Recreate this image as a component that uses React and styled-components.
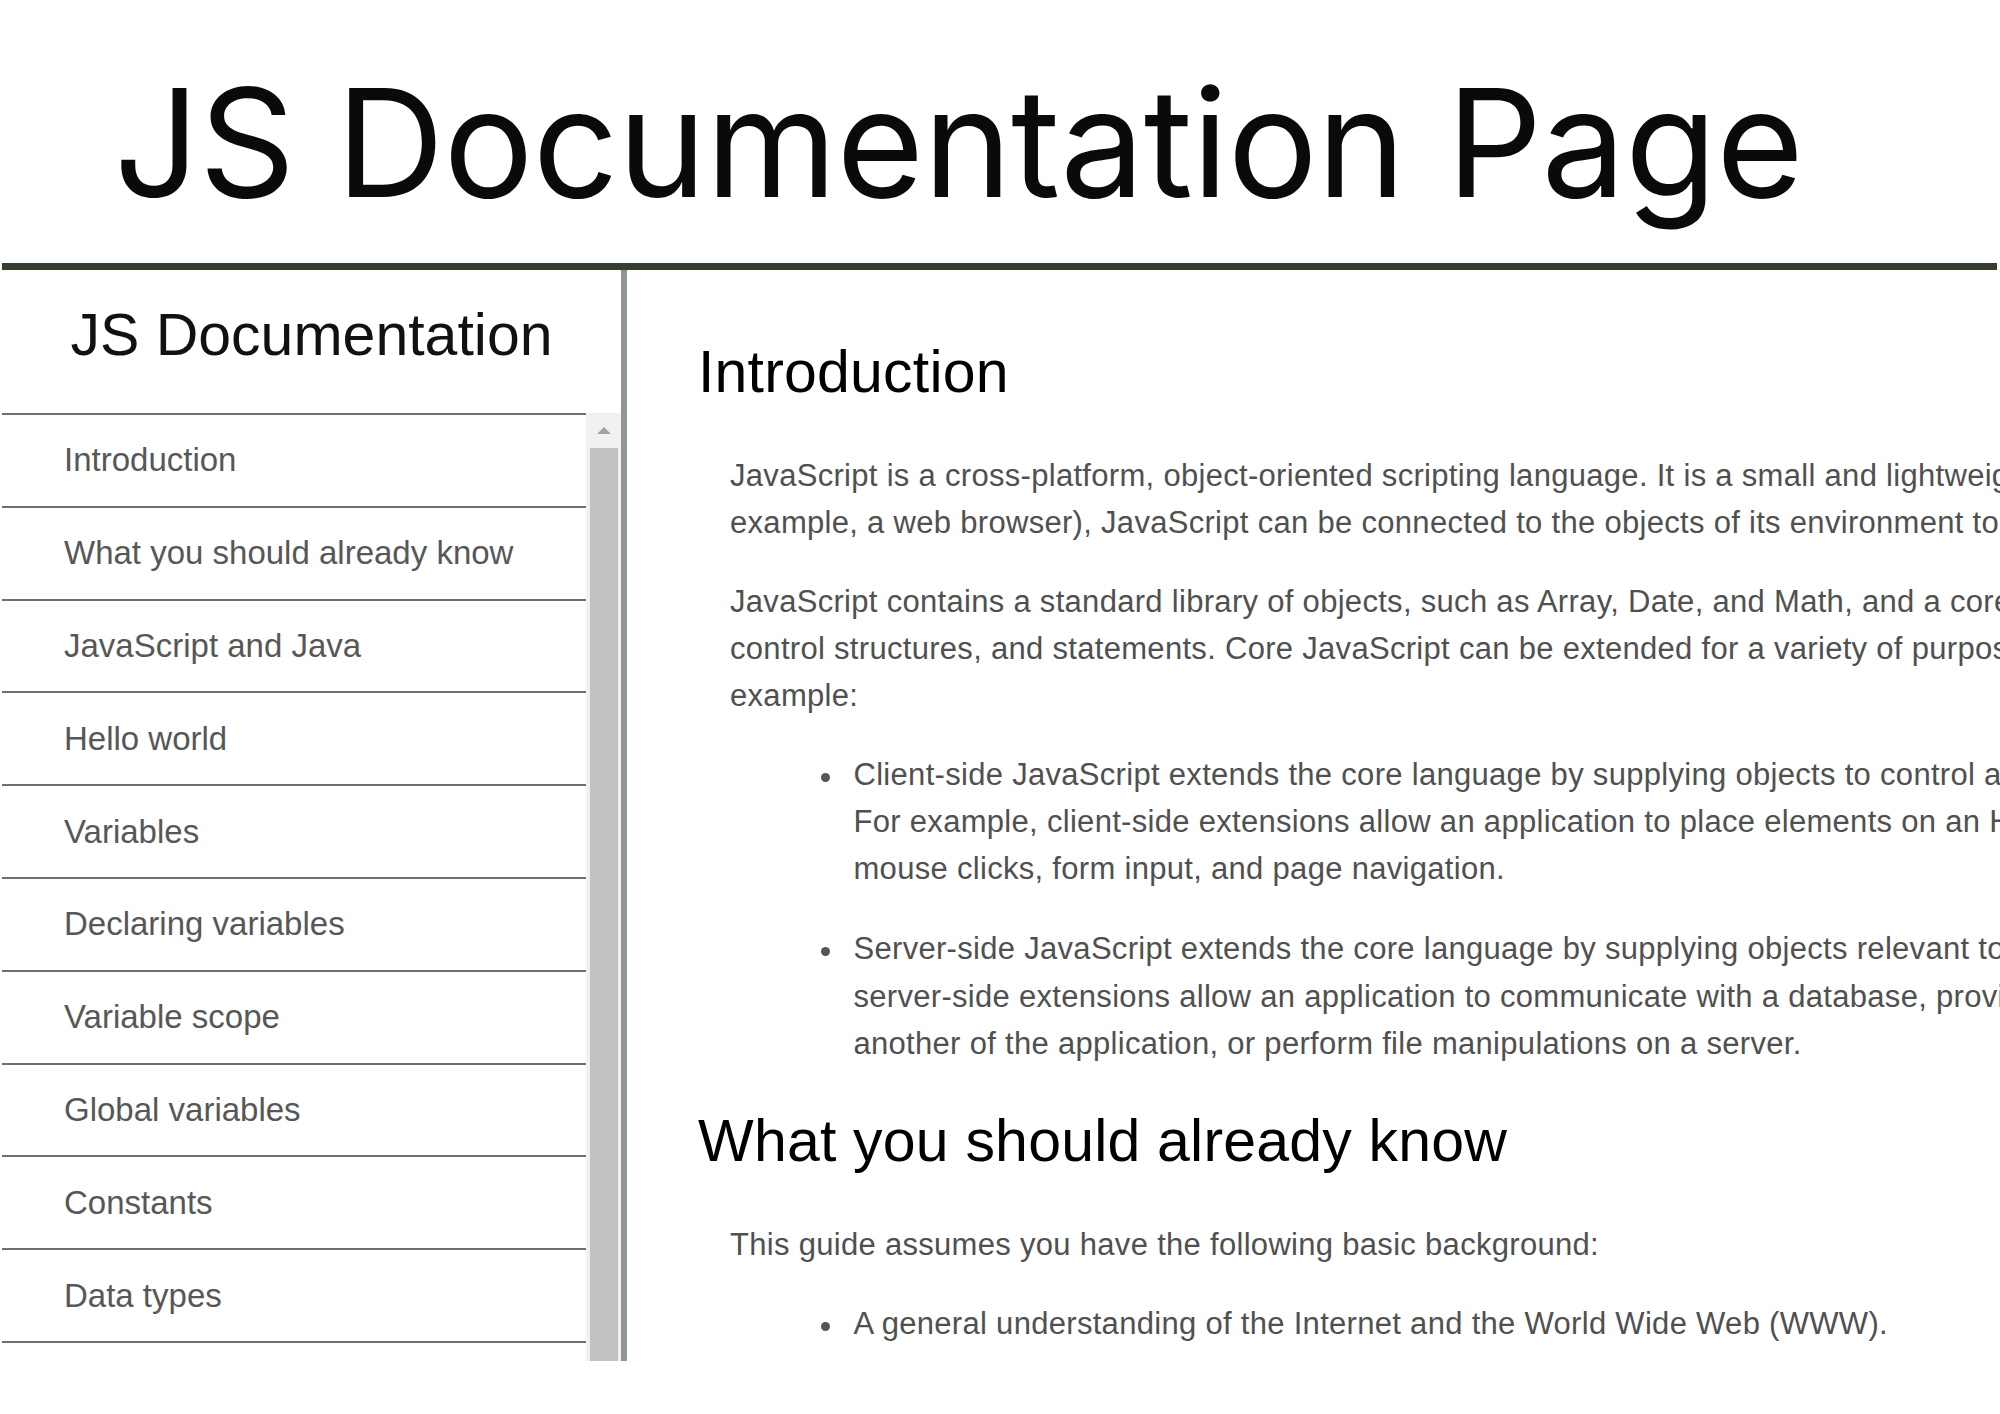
import React from "react";
import styled, { createGlobalStyle } from "styled-components";

const GlobalStyle = createGlobalStyle`
  html, body {
    margin: 0;
    padding: 0;
    background: #ffffff;
  }
  body {
    font-family: "Liberation Sans", Arial, sans-serif;
    overflow: hidden;
  }
`;

const Page = styled.div`
  padding-left: 2px;
  width: 1998px;
  overflow: hidden;
`;

const Header = styled.header`
  padding: 68px 0 45px 112px;
  margin-right: 3px;
  border-bottom: 7px solid #353e2f;
`;

const PageTitle = styled.h1`
  margin: 0;
  font-family: Inter, "Open Sans", sans-serif;
  font-weight: 400;
  font-size: 150px;
  line-height: 150px;
  letter-spacing: ${(p) => p.$spacing}px;
  color: #0a0a0a;
  white-space: nowrap;
`;

const Layout = styled.div`
  display: flex;
  height: 1091px;
  overflow: hidden;
`;

const Sidebar = styled.nav`
  width: 619px;
  flex-shrink: 0;
  display: flex;
  flex-direction: column;
  border-right: 6px solid #8d9895;
`;

const SidebarTitle = styled.header`
  margin: 0;
  padding: 31px 0 43px;
  font-size: 59px;
  line-height: 69px;
  font-weight: 400;
  color: #111111;
  text-align: center;
  white-space: nowrap;
`;

const NavArea = styled.div`
  flex: 1;
  min-height: 0;
  display: flex;
`;

const NavList = styled.ul`
  flex: 1;
  margin: 0;
  padding: 0;
  list-style: none;
  border-top: 2px solid #6f6f6f;
  overflow: hidden;
`;

const NavItem = styled.li`
  height: 90.8px;
  border-bottom: 2px solid #6f6f6f;
  display: flex;
  align-items: center;
  padding-left: 62px;
`;

const NavLink = styled.a`
  font-size: 33px;
  color: #575757;
  text-decoration: none;
  white-space: nowrap;
`;

const ScrollTrack = styled.div`
  width: 35px;
  flex-shrink: 0;
  background: #f1f1f1;
  display: flex;
  flex-direction: column;
  align-items: center;
`;

const ScrollButton = styled.div`
  height: 35px;
  width: 100%;
  display: flex;
  align-items: center;
  justify-content: center;
`;

const UpArrow = styled.span`
  width: 0;
  height: 0;
  border-left: 7px solid transparent;
  border-right: 7px solid transparent;
  border-bottom: 7px solid #a3a3a3;
`;

const ScrollThumb = styled.div`
  flex: 1;
  width: 28px;
  background: #c1c1c1;
`;

const Main = styled.main`
  flex: 1;
  min-width: 0;
  overflow: hidden;
  padding: 67px 0 0 71px;
`;

const Section = styled.section`
  margin-bottom: 39px;
`;

const SectionTitle = styled.h2`
  margin: 0;
  font-size: 59px;
  line-height: 70.8px;
  font-weight: 400;
  letter-spacing: 0.2px;
  color: #000000;
  white-space: nowrap;
`;

const SectionBody = styled.div`
  margin-top: 44px;
  padding-left: 32px;
`;

const Paragraph = styled.p`
  margin: 0 0 31.5px;
  font-size: 31px;
  line-height: 47.2px;
  letter-spacing: 0.3px;
  color: #505050;
`;

const Line = styled.span`
  display: block;
  white-space: nowrap;
`;

const BulletList = styled.ul`
  margin: 0;
  padding: 0 0 0 91px;
  list-style: none;
`;

const BulletItem = styled.li`
  display: flex;
  font-size: 31px;
  line-height: 47.2px;
  letter-spacing: 0.3px;
  color: #505050;
  & + & {
    margin-top: 33px;
  }
`;

const Dot = styled.span`
  width: 9px;
  height: 9px;
  border-radius: 50%;
  background: #555555;
  flex-shrink: 0;
  margin: 22px 23.5px 0 0;
`;

const BulletText = styled.div`
  min-width: 0;
`;

const navItems = [
  "Introduction",
  "What you should already know",
  "JavaScript and Java",
  "Hello world",
  "Variables",
  "Declaring variables",
  "Variable scope",
  "Global variables",
  "Constants",
  "Data types",
];

const sections = [
  {
    title: "Introduction",
    blocks: [
      {
        type: "p",
        lines: [
          "JavaScript is a cross-platform, object-oriented scripting language. It is a small and lightweight language. Inside a host environment (for",
          "example, a web browser), JavaScript can be connected to the objects of its environment to provide programmatic control over them.",
        ],
      },
      {
        type: "p",
        lines: [
          "JavaScript contains a standard library of objects, such as Array, Date, and Math, and a core set of language elements such as operators,",
          "control structures, and statements. Core JavaScript can be extended for a variety of purposes by supplementing it with additional objects; for",
          "example:",
        ],
      },
      {
        type: "ul",
        items: [
          [
            "Client-side JavaScript extends the core language by supplying objects to control a browser and its Document Object Model (DOM).",
            "For example, client-side extensions allow an application to place elements on an HTML form and respond to user events such as",
            "mouse clicks, form input, and page navigation.",
          ],
          [
            "Server-side JavaScript extends the core language by supplying objects relevant to running JavaScript on a server. For example,",
            "server-side extensions allow an application to communicate with a database, provide continuity of information from one invocation to",
            "another of the application, or perform file manipulations on a server.",
          ],
        ],
      },
    ],
  },
  {
    title: "What you should already know",
    blocks: [
      {
        type: "p",
        lines: ["This guide assumes you have the following basic background:"],
      },
      {
        type: "ul",
        items: [["A general understanding of the Internet and the World Wide Web (WWW)."]],
      },
    ],
  },
];

function Block({ block }) {
  if (block.type === "p") {
    return (
      <Paragraph>
        {block.lines.map((l, i) => (
          <Line key={i}>{l}</Line>
        ))}
      </Paragraph>
    );
  }
  return (
    <BulletList>
      {block.items.map((lines, i) => (
        <BulletItem key={i}>
          <Dot />
          <BulletText>
            {lines.map((l, j) => (
              <Line key={j}>{l}</Line>
            ))}
          </BulletText>
        </BulletItem>
      ))}
    </BulletList>
  );
}

export default function App() {
  return (
    <>
      <GlobalStyle />
      <Page>
        <Header>
          <PageTitle $spacing={-0.7}>JS Documentation Page</PageTitle>
        </Header>
        <Layout>
          <Sidebar id="navbar">
            <SidebarTitle>JS Documentation</SidebarTitle>
            <NavArea>
              <NavList>
                {navItems.map((item) => (
                  <NavItem key={item}>
                    <NavLink href={"#" + item.replace(/\s/g, "_")}>{item}</NavLink>
                  </NavItem>
                ))}
              </NavList>
              <ScrollTrack>
                <ScrollButton>
                  <UpArrow />
                </ScrollButton>
                <ScrollThumb />
              </ScrollTrack>
            </NavArea>
          </Sidebar>
          <Main id="main-doc">
            {sections.map((s) => (
              <Section key={s.title} id={s.title.replace(/\s/g, "_")}>
                <SectionTitle>{s.title}</SectionTitle>
                <SectionBody>
                  {s.blocks.map((b, i) => (
                    <Block key={i} block={b} />
                  ))}
                </SectionBody>
              </Section>
            ))}
          </Main>
        </Layout>
      </Page>
    </>
  );
}
